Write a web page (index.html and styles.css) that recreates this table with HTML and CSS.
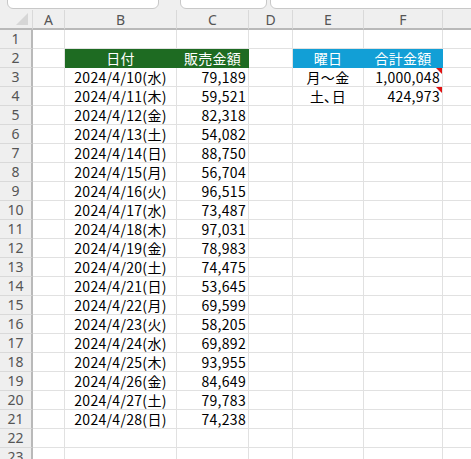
FILE: index.html
```html
<!DOCTYPE html>
<html lang="ja">
<head>
<meta charset="utf-8">
<link rel="stylesheet" href="styles.css">
</head>
<body>
<div class="topbar">
  <div class="tab tab1"></div>
  <div class="tab tab2"></div>
  <div class="tab tab3"></div>
</div>
<div class="sheet" id="sheet">
  <div class="corner"><span class="corner-tri"></span></div>
  <div class="colh">A</div><div class="colh">B</div><div class="colh">C</div><div class="colh">D</div><div class="colh">E</div><div class="colh">F</div><div class="colh last"></div>

  <div class="rowh">1</div><div class="c"></div><div class="c"></div><div class="c"></div><div class="c"></div><div class="c"></div><div class="c"></div><div class="c last"></div>

  <div class="rowh">2</div><div class="c"></div><div class="c hd green mid">日付</div><div class="c hd green">販売金額</div><div class="c"></div><div class="c hd blue mid">曜日</div><div class="c hd blue">合計金額</div><div class="c last"></div>

  <div class="rowh">3</div><div class="c"></div><div class="c ctr">2024/4/10(水)</div><div class="c num">79,189</div><div class="c"></div><div class="c ctr">月～金</div><div class="c num note">1,000,048</div><div class="c last"></div>
  <div class="rowh">4</div><div class="c"></div><div class="c ctr">2024/4/11(木)</div><div class="c num">59,521</div><div class="c"></div><div class="c ctr">土､日</div><div class="c num note">424,973</div><div class="c last"></div>
  <div class="rowh">5</div><div class="c"></div><div class="c ctr">2024/4/12(金)</div><div class="c num">82,318</div><div class="c"></div><div class="c"></div><div class="c"></div><div class="c last"></div>
  <div class="rowh">6</div><div class="c"></div><div class="c ctr">2024/4/13(土)</div><div class="c num">54,082</div><div class="c"></div><div class="c"></div><div class="c"></div><div class="c last"></div>
  <div class="rowh">7</div><div class="c"></div><div class="c ctr">2024/4/14(日)</div><div class="c num">88,750</div><div class="c"></div><div class="c"></div><div class="c"></div><div class="c last"></div>
  <div class="rowh">8</div><div class="c"></div><div class="c ctr">2024/4/15(月)</div><div class="c num">56,704</div><div class="c"></div><div class="c"></div><div class="c"></div><div class="c last"></div>
  <div class="rowh">9</div><div class="c"></div><div class="c ctr">2024/4/16(火)</div><div class="c num">96,515</div><div class="c"></div><div class="c"></div><div class="c"></div><div class="c last"></div>
  <div class="rowh">10</div><div class="c"></div><div class="c ctr">2024/4/17(水)</div><div class="c num">73,487</div><div class="c"></div><div class="c"></div><div class="c"></div><div class="c last"></div>
  <div class="rowh">11</div><div class="c"></div><div class="c ctr">2024/4/18(木)</div><div class="c num">97,031</div><div class="c"></div><div class="c"></div><div class="c"></div><div class="c last"></div>
  <div class="rowh">12</div><div class="c"></div><div class="c ctr">2024/4/19(金)</div><div class="c num">78,983</div><div class="c"></div><div class="c"></div><div class="c"></div><div class="c last"></div>
  <div class="rowh">13</div><div class="c"></div><div class="c ctr">2024/4/20(土)</div><div class="c num">74,475</div><div class="c"></div><div class="c"></div><div class="c"></div><div class="c last"></div>
  <div class="rowh">14</div><div class="c"></div><div class="c ctr">2024/4/21(日)</div><div class="c num">53,645</div><div class="c"></div><div class="c"></div><div class="c"></div><div class="c last"></div>
  <div class="rowh">15</div><div class="c"></div><div class="c ctr">2024/4/22(月)</div><div class="c num">69,599</div><div class="c"></div><div class="c"></div><div class="c"></div><div class="c last"></div>
  <div class="rowh">16</div><div class="c"></div><div class="c ctr">2024/4/23(火)</div><div class="c num">58,205</div><div class="c"></div><div class="c"></div><div class="c"></div><div class="c last"></div>
  <div class="rowh">17</div><div class="c"></div><div class="c ctr">2024/4/24(水)</div><div class="c num">69,892</div><div class="c"></div><div class="c"></div><div class="c"></div><div class="c last"></div>
  <div class="rowh">18</div><div class="c"></div><div class="c ctr">2024/4/25(木)</div><div class="c num">93,955</div><div class="c"></div><div class="c"></div><div class="c"></div><div class="c last"></div>
  <div class="rowh">19</div><div class="c"></div><div class="c ctr">2024/4/26(金)</div><div class="c num">84,649</div><div class="c"></div><div class="c"></div><div class="c"></div><div class="c last"></div>
  <div class="rowh">20</div><div class="c"></div><div class="c ctr">2024/4/27(土)</div><div class="c num">79,783</div><div class="c"></div><div class="c"></div><div class="c"></div><div class="c last"></div>
  <div class="rowh">21</div><div class="c"></div><div class="c ctr">2024/4/28(日)</div><div class="c num">74,238</div><div class="c"></div><div class="c"></div><div class="c"></div><div class="c last"></div>
  <div class="rowh">22</div><div class="c"></div><div class="c"></div><div class="c"></div><div class="c"></div><div class="c"></div><div class="c"></div><div class="c last"></div>
  <div class="rowh">23</div><div class="c"></div><div class="c"></div><div class="c"></div><div class="c"></div><div class="c"></div><div class="c"></div><div class="c last"></div>
</div>
</body>
</html>
```

FILE: styles.css
```css
* { box-sizing: border-box; }
html, body { margin: 0; padding: 0; background: #ffffff; overflow: hidden; }
body { width: 471px; height: 459px; font-family: "Noto Sans CJK JP", "Noto Sans", sans-serif; }

.topbar {
  position: relative;
  height: 10px;
  background: #efefef;
  overflow: hidden;
}
.tab {
  position: absolute;
  top: -6px;
  height: 15px;
  background: #ffffff;
  border: 1px solid #c8c8c8;
  border-radius: 0 0 6px 6px;
}
.tab1 { left: 7px; width: 152px; }
.tab2 { left: 180px; width: 87px; }
.tab3 { left: 270px; width: 220px; }

.sheet {
  display: grid;
  grid-template-columns: 33px 32px 112px 72px 44px 71px 79px 28px;
  grid-template-rows: 20px repeat(23, 19px);
  font-size: 14px;
  color: #000;
}

.corner {
  position: relative;
  background: #efefef;
  border-right: 1px solid #d9d9d9;
  border-bottom: 2px solid #b9b9b9;
}
.corner-tri {
  position: absolute;
  right: 4px;
  bottom: 3px;
  width: 0; height: 0;
  border-left: 12px solid transparent;
  border-bottom: 12px solid #d6d6d6;
}
.colh {
  background: #efefef;
  border-right: 1px solid #d9d9d9;
  border-bottom: 2px solid #b9b9b9;
  color: #555;
  font-family: "Noto Sans", "Open Sans", sans-serif;
  font-size: 14px;
  display: flex;
  align-items: center;
  justify-content: center;
  line-height: 1;
  padding-top: 1px;
}
.colh.last { border-right: none; }

.rowh {
  background: #efefef;
  border-right: 2px solid #b9b9b9;
  border-bottom: 1px solid #d9d9d9;
  color: #555;
  font-family: "Noto Sans", "Open Sans", sans-serif;
  font-size: 14px;
  display: flex;
  align-items: center;
  justify-content: center;
  line-height: 1;
}

.c {
  position: relative;
  border-right: 1px solid #e1e1e1;
  border-bottom: 1px solid #e1e1e1;
  display: flex;
  align-items: center;
  white-space: nowrap;
  line-height: 1;
  padding: 0 3px;
  letter-spacing: 0.3px;
}
.c.last { border-right: none; }
.ctr { justify-content: center; }
.num { justify-content: flex-end; padding-right: 2px; }
.hd { justify-content: center; color: #fff; }
.green { background: #1e6b22; border-color: #1e6b22; }
.blue { background: #129fd6; border-color: #129fd6; }
.green.mid { border-right-color: #1e6b22; }
.blue.mid { border-right-color: #129fd6; }

.note::after {
  content: "";
  position: absolute;
  top: 0;
  right: 0;
  width: 0; height: 0;
  border-left: 6px solid transparent;
  border-top: 6px solid #e01010;
}
```
